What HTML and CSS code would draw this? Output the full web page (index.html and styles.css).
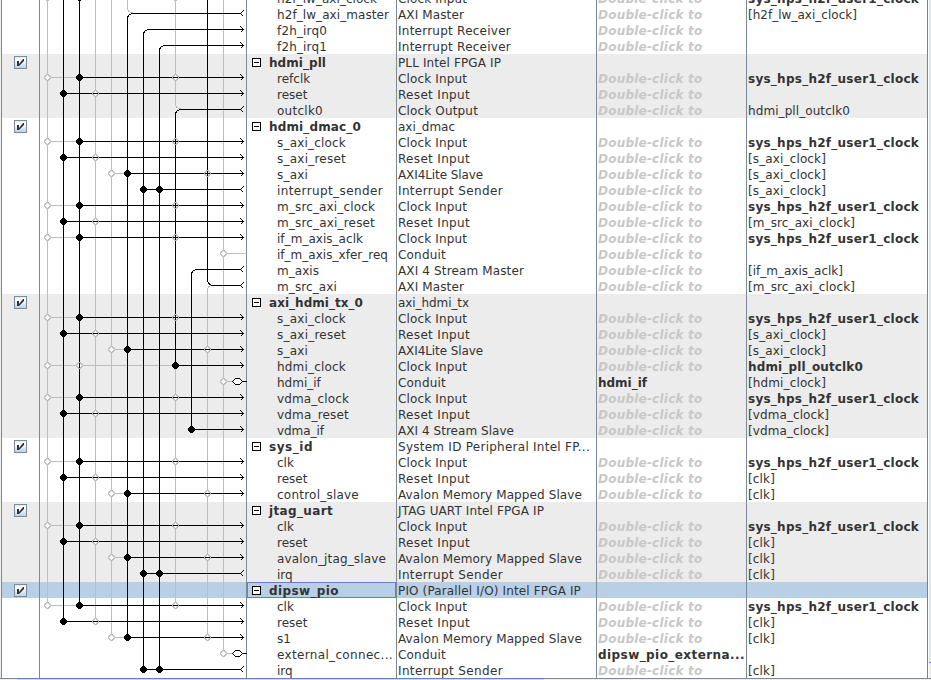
FILE: index.html
```html
<!DOCTYPE html>
<html lang="en">
<head>
<meta charset="utf-8">
<title>System Contents</title>
<link rel="stylesheet" href="styles.css">
</head>
<body>
<div class="window">
  <div class="edge"></div>
  <main class="table" id="table">
    <svg class="wires" id="wires" width="208" height="678" viewBox="39 0 208 678" shape-rendering="crispEdges" aria-hidden="true"></svg>
  </main>
  <div class="vscroll"><div class="vthumb"></div></div>
  <div class="hscroll"><div class="hthumb"></div></div>
</div>
<script src="app.js"></script>
</body>
</html>
```
FILE: styles.css
```css
* { box-sizing: border-box; }
body {
  margin: 0;
  width: 931px;
  height: 680px;
  overflow: hidden;
  background: #eee;
  color: #333;
  font: 12px/16px "DejaVu Sans", sans-serif;
}
.window {
  display: grid;
  grid-template-columns: 1px 927px 3px;
  grid-template-rows: 678px 2px;
  height: 680px;
}
.edge { background: #eee; }
.table {
  position: relative;
  overflow: hidden;
  display: flex;
  flex-direction: column;
  justify-content: flex-end;
  background: #fff;
  border-right: 1px solid #6382bf;
}
.row {
  display: grid;
  grid-template-columns: 38px 207px 150px 200px 150px 1fr;
  flex: 0 0 16px;
  height: 16px;
}
.shaded { background: #ececec; }
.selected { background: #b8cfe5; }
.cell {
  border-left: 1px solid #7a8a99;
  height: 16px;
  padding: 1px 0 0 1px;
  white-space: pre;
  overflow: hidden;
}
.use { padding: 2px 0 0 12px; }
.name { padding-left: 30px; }
.module .name {
  display: flex;
  padding-left: 5px;
  font-weight: bold;
}
.selected .name { box-shadow: inset 0 0 0 1px #6382bf; }
.bold { font-weight: bold; }
.hint { font-weight: bold; font-style: oblique; color: #c8c8c8; }
.check { display: block; }
.toggle {
  flex: none;
  width: 9px;
  height: 9px;
  margin: 3px 8px 0 0;
  padding: 3px 1px;
  border: 1px solid #000;
  background: #fff;
}
.toggle::before { content: ""; display: block; height: 1px; background: #000; }
.wires { position: absolute; left: 38px; top: 0; }
.soft { fill: none; stroke: #bebebe; }
.line { fill: none; stroke: #000; }
.dot { fill: #000; }
.ring { fill: #bebebe; }
.hole { fill: #fff; }
.pill { fill: #fff; stroke: #000; }
.vscroll { background: #eee; border-left: 1px solid #fff; }
.vthumb { height: 663px; background: #dce8f6; border-bottom: 1px solid #6382bf; }
.hscroll {
  grid-column: 1 / 4;
  border-top: 1px solid #7a8a99;
  background: #eee;
}
.hthumb {
  width: 527px;
  height: 2px;
  margin: -1px 0 0 17px;
  background: #c8dcf2;
  border-top: 1px solid #6382bf;
}
```
FILE: app.js
```js
// Each row: name, description, export, clock, wire type. Modules have no wire.
const SYS = "*sys_hps_h2f_user1_clock";
const rows = [
  ["h2f_lw_axi_clock", "Clock Input", "", SYS, "clock"],
  ["h2f_lw_axi_master", "AXI Master", "", "[h2f_lw_axi_clock]", "up127<"],
  ["f2h_irq0", "Interrupt Receiver", "", "", "up143>"],
  ["f2h_irq1", "Interrupt Receiver", "", "", "up159>"],
  ["hdmi_pll", "PLL Intel FPGA IP", "shaded"],
  ["refclk", "Clock Input", "", SYS, "clock"],
  ["reset", "Reset Input", "", "", "reset"],
  ["outclk0", "Clock Output", "", "hdmi_pll_outclk0", "up175<"],
  ["hdmi_dmac_0", "axi_dmac", ""],
  ["s_axi_clock", "Clock Input", "", SYS, "clock"],
  ["s_axi_reset", "Reset Input", "", "[s_axi_clock]", "reset"],
  ["s_axi", "AXI4Lite Slave", "", "[s_axi_clock]", "slave"],
  ["interrupt_sender", "Interrupt Sender", "", "[s_axi_clock]", "irq"],
  ["m_src_axi_clock", "Clock Input", "", SYS, "clock"],
  ["m_src_axi_reset", "Reset Input", "", "[m_src_axi_clock]", "reset"],
  ["if_m_axis_aclk", "Clock Input", "", SYS, "clock"],
  ["if_m_axis_xfer_req", "Conduit", "", "", "open"],
  ["m_axis", "AXI 4 Stream Master", "", "[if_m_axis_aclk]", "up191<"],
  ["m_src_axi", "AXI Master", "", "[m_src_axi_clock]", "down"],
  ["axi_hdmi_tx_0", "axi_hdmi_tx", "shaded"],
  ["s_axi_clock", "Clock Input", "", SYS, "clock"],
  ["s_axi_reset", "Reset Input", "", "[s_axi_clock]", "reset"],
  ["s_axi", "AXI4Lite Slave", "", "[s_axi_clock]", "slave"],
  ["hdmi_clock", "Clock Input", "", "*hdmi_pll_outclk0", "pixel"],
  ["hdmi_if", "Conduit", "hdmi_if", "[hdmi_clock]", "conduit"],
  ["vdma_clock", "Clock Input", "", SYS, "clock"],
  ["vdma_reset", "Reset Input", "", "[vdma_clock]", "reset"],
  ["vdma_if", "AXI 4 Stream Slave", "", "[vdma_clock]", "stream"],
  ["sys_id", "System ID Peripheral Intel FP...", ""],
  ["clk", "Clock Input", "", SYS, "clock"],
  ["reset", "Reset Input", "", "[clk]", "reset"],
  ["control_slave", "Avalon Memory Mapped Slave", "", "[clk]", "slave"],
  ["jtag_uart", "JTAG UART Intel FPGA IP", "shaded"],
  ["clk", "Clock Input", "", SYS, "clock"],
  ["reset", "Reset Input", "", "[clk]", "reset"],
  ["avalon_jtag_slave", "Avalon Memory Mapped Slave", "", "[clk]", "slave"],
  ["irq", "Interrupt Sender", "", "[clk]", "irq"],
  ["dipsw_pio", "PIO (Parallel I/O) Intel FPGA IP", "selected"],
  ["clk", "Clock Input", "", SYS, "clock"],
  ["reset", "Reset Input", "", "[clk]", "reset"],
  ["s1", "Avalon Memory Mapped Slave", "", "[clk]", "slave"],
  ["external_connec...", "Conduit", "dipsw_pio_externa...", "", "conduit"],
  ["irq", "Interrupt Sender", "", "[clk]", "irq"]
];
// Advance widths of the longer labels, in pixels ("*" marks the bold ones).
const widths = {
  "h2f_lw_axi_clock": 100, "h2f_lw_axi_master": 112, "f2h_irq0": 50, "f2h_irq1": 50,
  "outclk0": 46, "s_axi_clock": 69, "s_axi_reset": 69, "s_axi": 31, "interrupt_sender": 106,
  "m_src_axi_clock": 98, "m_src_axi_reset": 98, "if_m_axis_aclk": 86, "if_m_axis_xfer_req": 111,
  "m_axis": 42, "m_src_axi": 60, "hdmi_clock": 69, "vdma_clock": 72, "vdma_reset": 72, "vdma_if": 47,
  "control_slave": 82, "avalon_jtag_slave": 109, "external_connec...": 116,
  "*hdmi_pll": 57, "*hdmi_dmac_0": 92, "*axi_hdmi_tx_0": 94, "*sys_id": 44, "*jtag_uart": 64, "*dipsw_pio": 70,
  "Clock Input": 69, "AXI Master": 66, "Interrupt Receiver": 113, "PLL Intel FPGA IP": 103,
  "Reset Input": 72, "Clock Output": 80, "axi_dmac": 57, "AXI4Lite Slave": 85, "Interrupt Sender": 105,
  "Conduit": 48, "AXI 4 Stream Master": 126, "axi_hdmi_tx": 71, "AXI 4 Stream Slave": 116,
  "System ID Peripheral Intel FP...": 192, "Avalon Memory Mapped Slave": 184,
  "JTAG UART Intel FPGA IP": 146, "PIO (Parallel I/O) Intel FPGA IP": 183,
  "*Double-click to": 104.5, "*hdmi_if": 49, "*dipsw_pio_externa...": 147,
  "*sys_hps_h2f_user1_clock": 171, "*hdmi_pll_outclk0": 115, "hdmi_pll_outclk0": 102,
  "[h2f_lw_axi_clock]": 109, "[s_axi_clock]": 78, "[m_src_axi_clock]": 107, "[if_m_axis_aclk]": 95,
  "[hdmi_clock]": 78, "[vdma_clock]": 81, "[vdma_reset]": 81, "[clk]": 27
};
const checkbox = '<svg class="check" width="13" height="13" viewBox="0 0 13 13"><defs><linearGradient id="cb" x2="0" y2="1"><stop offset="0" stop-color="#e4eef8"/><stop offset=".3" stop-color="#fff"/><stop offset="1" stop-color="#b8cfe5"/></linearGradient></defs><rect x=".5" y=".5" width="12" height="12" fill="url(#cb)" stroke="#7a8a99"/><path d="M3 5H5V8L9 3H10V5L5 10H3Z" fill="#333"/></svg>';

let soft = "", line = "", dots = "", rings = "", holes = "", pills = "";
const h = (x1, x2, y) => `M${x1} ${y + .5}H${x2}`;
const v = (x, y1, y2) => `M${x + .5} ${y1}V${y2}`;
const dot = (x, y) => { dots += `M${x - 1} ${y - 3}h3v1h1v1h1v3h-1v1h-1v1h-3v-1h-1v-1h-1v-3h1v-1h1z`; };
const ring = (x, y) => {
  const hole = `M${x} ${y - 2}h1v1h1v1h1v1h-1v1h-1v1h-1v-1h-1v-1h-1v-1h1v-1h1z`;
  rings += `M${x - 1} ${y - 3}h3v1h1v1h1v3h-1v1h-1v1h-3v-1h-1v-1h-1v-3h1v-1h1z` + hole;
  holes += hole;
};
const head = y => { line += `M240.5 ${y - 2.5}L243.5 ${y + .5}L240.5 ${y + 3.5}`; };
const tail = y => { line += `M243.5 ${y - 2.5}L240.5 ${y + .5}L243.5 ${y + 3.5}`; };
const bus = (x, y) => { line += h(x, 244, y); head(y); };

function wire(kind, y) {
  if (kind === "clock") { ring(47, y); soft += h(50, 79, y); dot(79, y); ring(175, y); bus(79, y); }
  else if (kind === "reset") { dot(63, y); ring(95, y); bus(63, y); }
  else if (kind === "slave") { ring(111, y); soft += h(114, 127, y); dot(127, y); ring(207, y); bus(127, y); }
  else if (kind === "irq") { dot(143, y); dot(159, y); line += h(143, 241, y); tail(y); }
  else if (kind === "pixel") { ring(47, y); ring(79, y); soft += h(50, 175, y); dot(175, y); bus(175, y); }
  else if (kind === "stream") { dot(191, y); bus(191, y); }
  else if (kind === "open") { ring(223, y); soft += h(226, 247, y); }
  else if (kind === "conduit") {
    ring(223, y); soft += h(226, 232, y); line += h(242, 247, y);
    pills += `M235.5 ${y - 2.5}H239.5L242.5 ${y + .5}L239.5 ${y + 3.5}H235.5L232.5 ${y + .5}Z`;
  }
  else if (kind === "down") { line += `M207.5 ${y - 6}q0 6 6 6.5H241`; tail(y); soft += `M207.5 ${y + 6}q0 -5 4 -5.5`; }
  else {
    const x = +kind.slice(2, 5);
    line += `M${x + .5} ${y + 6}q0 -5 6 -5.5H${kind[5] === "<" ? 241 : 244}`;
    if (kind[5] === "<") tail(y); else head(y);
    if (x === 127 || x === 175) soft += `M${x + .5} ${y - 5}q0 4 5 5`;
  }
}

const text = (s, bold) => `<span data-key="${bold ? "*" : ""}${s}">${s}</span>`;
const table = document.getElementById("table");
let group = "";
rows.forEach(([name, desc, exp, clock, kind], i) => {
  const row = document.createElement("div");
  const module = kind === undefined;
  if (module) group = exp;
  row.className = "row" + (module ? " module" : "") + (group === "shaded" || (module && group) ? " " + group : "");
  const bold = !!clock && clock[0] === "*";
  const label = (module ? '<i class="toggle"></i>' : "") + text(name, module);
  const port = module ? "" : text(exp || "Double-click to", true);
  row.innerHTML =
    `<div class="cell use">${module ? checkbox : ""}</div><div class="cell"></div>` +
    `<div class="cell name">${label}</div><div class="cell">${text(desc, false)}</div>` +
    `<div class="cell ${exp ? "bold" : "hint"}">${port}</div>` +
    `<div class="cell clock${bold ? " bold" : ""}">${clock ? text(bold ? clock.slice(1) : clock, bold) : ""}</div>`;
  table.appendChild(row);
  if (!module) wire(kind, i * 16 - 3);
});

table.querySelectorAll("span[data-key]").forEach(span => {
  const target = widths[span.dataset.key];
  if (!target) return;
  const gap = (target - span.getBoundingClientRect().width) / span.textContent.length;
  span.style.letterSpacing = gap.toFixed(3) + "px";
});

soft += v(47, 0, 605) + v(95, 0, 621) + v(111, 0, 637) + v(127, 0, 8) + v(175, 0, 104) +
  v(175, 366, 605) + v(207, 291, 637) + v(223, 0, 653);
line += v(63, 0, 621) + v(79, 0, 605) + v(127, 19, 637) + v(143, 35, 669) + v(159, 51, 669) +
  v(175, 115, 365) + v(191, 275, 429) + v(207, 0, 279);
document.getElementById("wires").innerHTML =
  `<path class="soft" d="${soft}"/><path class="hole" d="${holes}"/><path class="line" d="${line}"/>` +
  `<path class="ring" fill-rule="evenodd" d="${rings}"/><path class="dot" d="${dots}"/><path class="pill" d="${pills}"/>`;
```
